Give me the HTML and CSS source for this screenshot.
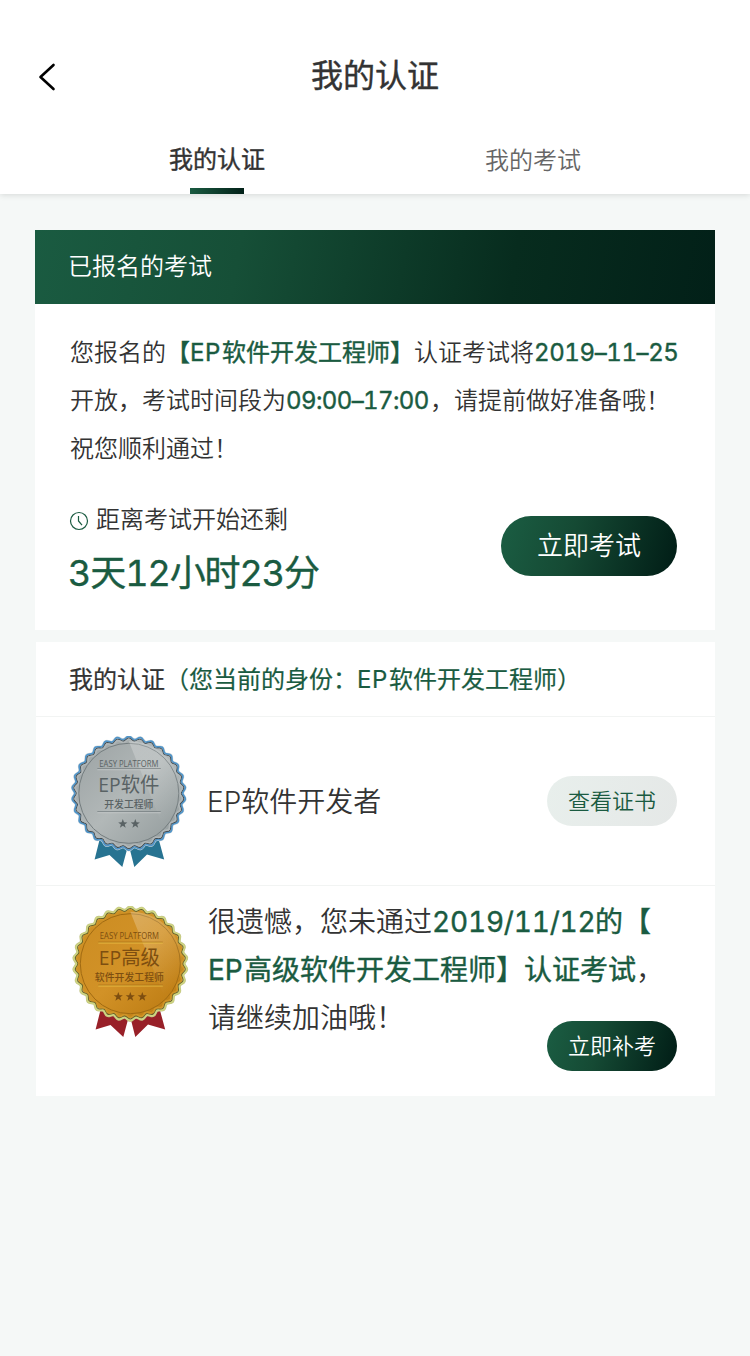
FILE: index.html
```html
<!DOCTYPE html>
<html lang="zh-CN">
<head>
<meta charset="utf-8">
<title>我的认证</title>
<link rel="stylesheet" href="styles.css">
</head>
<body>
<svg class="defs" width="0" height="0" aria-hidden="true">
  <defs>
    <path id="lobe" d="M-5.7,-53.6C-3.1,-53.9 -2.6,-56.8 0,-56.8C2.6,-56.8 3.1,-53.9 5.7,-53.6"/>
    <g id="lobes5">
      <use href="#lobe"/><use href="#lobe" transform="rotate(12)"/><use href="#lobe" transform="rotate(24)"/><use href="#lobe" transform="rotate(36)"/><use href="#lobe" transform="rotate(48)"/>
    </g>
    <g id="scallop">
      <use href="#lobes5"/><use href="#lobes5" transform="rotate(60)"/><use href="#lobes5" transform="rotate(120)"/><use href="#lobes5" transform="rotate(180)"/><use href="#lobes5" transform="rotate(240)"/><use href="#lobes5" transform="rotate(300)"/>
    </g>
    <path id="star" d="M0,-4.8L1.2,-1.5L4.6,-1.4L1.9,.6L2.9,4L0,2L-2.9,4L-1.9,.6L-4.6,-1.4L-1.2,-1.5Z"/>
    <path id="ribbon" d="M31 98L24.6 123.5L39.5 119L52.3 131L58.5 108L64.3 131L77 118.5L94.2 123.5L87 97Z"/>
    <linearGradient id="silver" x1="0" y1="0" x2="1" y2="1">
      <stop offset="0" stop-color="#9aa1a2"/><stop offset=".5" stop-color="#b2b8b8"/><stop offset="1" stop-color="#8f9899"/>
    </linearGradient>
    <linearGradient id="gold" x1="0" y1="0" x2="1" y2="1">
      <stop offset="0" stop-color="#cb8c22"/><stop offset=".5" stop-color="#d29227"/><stop offset="1" stop-color="#b8770f"/>
    </linearGradient>
    <linearGradient id="shine" x1="0" y1="0" x2=".5" y2="1">
      <stop offset="0" stop-color="#fff" stop-opacity=".65"/><stop offset="1" stop-color="#fff" stop-opacity="0"/>
    </linearGradient>
  </defs>
</svg>

<header class="header">
  <div class="navbar">
    <svg class="back" width="18" height="30" viewBox="0 0 18 30"><path d="M15.5 3L2.5 15L15.5 27"/></svg>
    <h1 class="title">我的认证</h1>
  </div>
  <nav class="tabs">
    <a class="tab tab-active">我的认证</a>
    <a class="tab">我的考试</a>
  </nav>
</header>

<main class="content">
  <section class="card exam">
    <h2 class="exam-head">已报名的考试</h2>
    <p class="notice">您报名的<b>【<span class="ep">EP</span>软件开发工程师】</b>认证考试将<b class="date">2019–11–25</b><br>开放，考试时间段为<b class="time">09:00–17:00</b>，请提前做好准备哦！<br>祝您顺利通过！</p>
    <div class="countdown">
      <div>
        <div class="remain-label">
          <svg class="clock" width="20" height="20" viewBox="0 0 20 20"><circle cx="10" cy="10" r="8.5"/><path d="M9.5 5V10L13 14.2"/></svg>
          <span>距离考试开始还剩</span>
        </div>
        <div class="remain">3天<span>12</span>小时<span>23</span>分</div>
      </div>
      <a class="button button-large">立即考试</a>
    </div>
  </section>

  <section class="card certs">
    <h2 class="certs-head">我的认证<span>（您当前的身份：<span class="ep">EP</span>软件开发工程师）</span></h2>
    <div class="cert">
      <svg class="badge" width="120" height="134" viewBox="0 0 120 134">
        <use href="#ribbon" class="ribbon-blue"/>
        <g transform="translate(58.8 57.3)">
          <circle r="54.5" fill="url(#silver)"/>
          <use href="#scallop" class="line" stroke="#d8dcdc" stroke-width="2.8"/>
          <use href="#scallop" class="line" stroke="#4f94c9" stroke-width="1.8"/>
          <use href="#scallop" class="line" stroke="#3f4a50" stroke-width="1.1" transform="scale(.973)"/>
          <use href="#scallop" class="line" stroke="#b0b6b7" stroke-width="1.8" transform="scale(.947)"/>
          <circle r="50" class="ring" stroke="#747d7f"/>
          <path d="M0 -52A52 52 0 0 1 36 38Z" fill="url(#shine)" opacity=".4"/>
          <path d="M-31.5 -24.5H32M-31.5 18.5H32" stroke="#666f71" stroke-width=".8"/>
          <path d="M-31.5 -23.6H32M-31.5 19.4H32" stroke="#d3d7d7" stroke-width=".7"/>
          <g class="silver-ink">
            <text class="b-small" y="-26.5" textLength="59" lengthAdjust="spacingAndGlyphs">EASY PLATFORM</text>
            <text class="b-large" y="-1" textLength="61" lengthAdjust="spacingAndGlyphs">EP软件</text>
            <text class="b-role" y="15" textLength="49">开发工程师</text>
            <use href="#star" x="-6" y="30.5"/><use href="#star" x="6.5" y="30.5"/>
          </g>
        </g>
      </svg>
      <div class="cert-name">EP软件开发者</div>
      <a class="button button-light">查看证书</a>
    </div>
    <div class="cert cert-failed">
      <svg class="badge" width="120" height="134" viewBox="0 0 120 134">
        <use href="#ribbon" class="ribbon-red"/>
        <g transform="translate(59.3 57.7)">
          <circle r="54.5" fill="url(#gold)"/>
          <use href="#scallop" class="line" stroke="#c2c486" stroke-width="2.8"/>
          <use href="#scallop" class="line" stroke="#cfd680" stroke-width="1.6"/>
          <use href="#scallop" class="line" stroke="#67642a" stroke-width="1.1" transform="scale(.973)"/>
          <use href="#scallop" class="line" stroke="#cf9428" stroke-width="1.8" transform="scale(.947)"/>
          <circle r="50" class="ring" stroke="#a16b12"/>
          <path d="M0 -52A52 52 0 0 1 36 38Z" fill="url(#shine)" opacity=".4"/>
          <path d="M-32 -21.5H32.5M-32 21.5H32.5" stroke="#946010" stroke-width=".7"/>
          <path d="M-32 -20.7H32.5M-32 22.3H32.5" stroke="#f0c64a" stroke-width=".8"/>
          <g class="gold-ink" transform="translate(-1 0)">
            <text class="b-small" y="-25" textLength="59" lengthAdjust="spacingAndGlyphs">EASY PLATFORM</text>
            <text class="b-large" y="1.5" textLength="61" lengthAdjust="spacingAndGlyphs">EP高级</text>
            <text class="b-role" y="17.5" textLength="69">软件开发工程师</text>
            <use href="#star" x="-11" y="33"/><use href="#star" x="1" y="33"/><use href="#star" x="13" y="33"/>
          </g>
        </g>
      </svg>
      <div class="result">
        <p class="result-text">很遗憾，您未通过<b><span class="rdate">2019/11/12</span>的【<br><span class="ep">EP</span>高级软件开发工程师】认证考试</b>，<br>请继续加油哦！</p>
        <a class="button">立即补考</a>
      </div>
    </div>
  </section>
</main>
</body>
</html>
```
FILE: styles.css
```css
* { box-sizing: border-box; }
body {
  margin: 0;
  min-height: 1356px;
  background: #f5f8f7;
  color: #333;
  font-family: Inter, "Noto Sans CJK SC", sans-serif;
  font-size: 24px;
  font-weight: 350;
}
h1, h2, p { margin: 0; }
b { color: #1a5b41; font-weight: 400; }
b, .title, .tab-active, .remain { -webkit-text-stroke: .4px; }
.certs-head { -webkit-text-stroke: .2px; }
.defs { position: absolute; }
.header {
  height: 194px;
  background: #fff;
  box-shadow: 0 1px 6px rgba(0, 0, 0, .13);
}
.navbar {
  display: grid;
  grid-template-columns: 100px 1fr 100px;
  align-items: center;
  height: 126px;
  padding-top: 28px;
}
.back {
  margin-left: 38px;
  fill: none;
  stroke: #000;
  stroke-width: 2.6;
  stroke-linecap: round;
  stroke-linejoin: round;
}
.title {
  font-size: 32px;
  line-height: 46px;
  font-weight: 400;
  text-align: center;
  padding-bottom: 2px;
}
.tabs {
  display: flex;
  justify-content: center;
  gap: 220px;
  height: 68px;
}
.tab {
  display: flex;
  flex-direction: column;
  align-items: center;
  justify-content: space-between;
  width: 96px;
  line-height: 69px;
  color: #666;
  white-space: nowrap;
}
.tab-active { color: #333; font-weight: 400; line-height: 67px; }
.tab-active::after {
  content: "";
  width: 54px;
  height: 6px;
  margin-top: -5px;
  background: linear-gradient(100deg, #1a5b41, #022018);
}
.content { padding: 36px 35px; }
.card { background: #fff; }
.exam { height: 400px; }
.exam-head {
  height: 74px;
  padding-left: 33px;
  background: linear-gradient(100deg, #1a5b41 0%, #164f37 30%, #072c1e 70%, #022018 100%);
  color: #fff;
  font-size: 24px;
  font-weight: 350;
  line-height: 73px;
}
.notice {
  padding: 25px 0 0 35px;
  line-height: 48px;
  white-space: nowrap;
}
.ep { display: inline-block; width: 32px; letter-spacing: .6px; }
.date, .time, .rdate {
  display: inline-block;
  width: 144px;
  font-feature-settings: "tnum";
}
.date { letter-spacing: -.4px; }
.time { letter-spacing: -.6px; }
.countdown {
  display: flex;
  justify-content: space-between;
  align-items: flex-start;
  padding: 32px 38px 0 33px;
}
.remain-label {
  display: flex;
  align-items: center;
  gap: 7px;
  height: 30px;
  padding-left: 1px;
}
.remain-label span { margin-top: -5px; }
.clock {
  margin-top: 2px;
  fill: none;
  stroke: #1a5b41;
  stroke-width: 1.2;
}
.remain {
  margin-top: 12px;
  color: #1a5b41;
  font-size: 36px;
  font-weight: 400;
  line-height: 52px;
  letter-spacing: -1.1px;
  font-feature-settings: "tnum";
}
.button {
  display: block;
  width: 130px;
  height: 50px;
  border-radius: 25px;
  background: linear-gradient(105deg, #1a5b41 5%, #154a34 40%, #022018 95%);
  color: #fff;
  font-size: 22px;
  font-weight: 350;
  line-height: 50px;
  text-align: center;
}
.button-large {
  width: 176px;
  height: 60px;
  margin-top: 11px;
  border-radius: 30px;
  font-size: 26px;
  line-height: 60px;
}
.button-light {
  background: linear-gradient(105deg, #e8efec, #e5e8e7);
  color: #1a5b41;
}
.certs { margin: 12px 0 0 1px; height: 454px; }
.certs-head {
  height: 74px;
  padding-left: 33px;
  font-size: 24px;
  font-weight: 400;
  line-height: 76px;
  white-space: nowrap;
}
.certs-head span { color: #1a5b41; }
.cert {
  display: grid;
  grid-template-columns: 120px 1fr 130px;
  column-gap: 16px;
  align-items: center;
  height: 169px;
  padding: 0 38px 0 34px;
  border-top: 1px solid #f2f4f3;
}
.badge { align-self: start; margin-top: 19px; }
.cert-name { padding: 2px 0 0 1px; font-size: 28px; line-height: 48px; }
.cert-failed {
  grid-template-columns: 120px 1fr;
  align-items: start;
  padding-left: 35px;
  column-gap: 17px;
  height: 211px;
}
.cert-failed .badge { margin-top: 20px; }
.result {
  display: flex;
  flex-direction: column;
  align-items: flex-end;
  padding-top: 12px;
}
.result-text {
  align-self: stretch;
  font-size: 28px;
  line-height: 48px;
  white-space: nowrap;
}
.result-text .ep { width: 36px; letter-spacing: 0; }
.result-text .rdate { width: 163px; letter-spacing: -.2px; }
.result .button { margin-top: -21px; }
.line, .ring { fill: none; }
.ribbon-blue { fill: #277391; }
.ribbon-red { fill: #982028; }
.b-small, .b-large, .b-role { text-anchor: middle; }
.b-small { font: 400 8.5px "Open Sans", sans-serif; }
.b-large { font: 400 20px "Open Sans", "Noto Sans CJK SC", sans-serif; }
.b-role { font: 500 9.8px "Noto Sans CJK SC", sans-serif; }
.silver-ink { fill: #596264; }
.gold-ink { fill: #7d4e10; }
```
